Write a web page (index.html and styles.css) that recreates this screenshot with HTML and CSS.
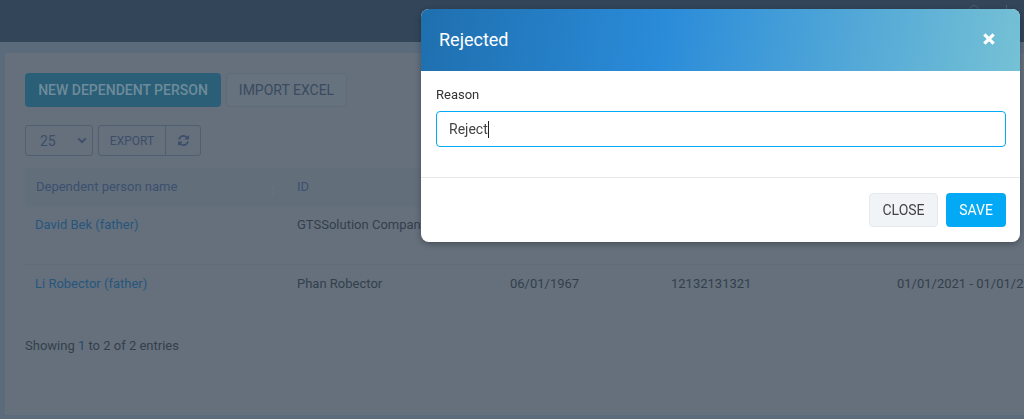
FILE: index.html
```html
<!DOCTYPE html>
<html lang="en">
<head>
  <meta charset="UTF-8" />
  <title>Dependent person</title>
  <meta name="viewport" content="width=device-width, initial-scale=1.0">
  <link rel="stylesheet" href="styles.css">
</head>
<body>

  <header class="topbar">
    <span class="topbar-search"></span>
    <span class="topbar-line"></span>
  </header>

  <main class="card">
    <div class="actions">
      <button class="btn btn-primary">NEW DEPENDENT PERSON</button>
      <button class="btn btn-light">IMPORT EXCEL</button>
    </div>

    <div class="tools">
      <div class="page-size">
        <span>25</span>
        <svg class="chevron" viewBox="0 0 12 8"><path d="M1.5 1.5 6 6l4.500-4.500" /></svg>
      </div>
      <div class="tool-group">
        <span class="tool tool-export">EXPORT</span>
        <span class="tool tool-refresh">
          <svg viewBox="0 0 1536 1536"><path d="M1511 928q0 5-1 7-64 268-268 434.500t-478 166.500q-146 0-282.500-55t-243.500-157l-129 129q-19 19-45 19t-45-19-19-45v-448q0-26 19-45t45-19h448q26 0 45 19t19 45-19 45l-137 137q71 66 161 102t187 36q134 0 250-65t186-179q11-17 53-117 8-23 30-23h192q13 0 22.500 9.500t9.500 22.500zm25-800v448q0 26-19 45t-45 19h-448q-26 0-45-19t-19-45 19-45l138-138q-148-137-349-137-134 0-250 65t-186 179q-11 17-53 117-8 23-30 23h-199q-13 0-22.500-9.500t-9.500-22.500v-7q65-268 270-434.500t480-166.500q146 0 284 55.500t245 156.500l130-129q19-19 45-19t45 19 19 45z" /></svg>
        </span>
      </div>
    </div>

    <div class="table">
      <div class="row row-head">
        <span class="head-cell">Dependent person name
          <svg class="sort" viewBox="0 0 8 14"><path d="M4 1 7 6H1zM4 13 1 8h6z" /></svg>
        </span>
        <span>ID</span>
      </div>
      <div class="row">
        <a href="#">David Bek (father)</a>
        <span>GTSSolution Company</span>
      </div>
      <div class="row row-last">
        <a href="#">Li Robector (father)</a>
        <span>Phan Robector</span>
        <span>06/01/1967</span>
        <span>12132131321</span>
        <span>01/01/2021 - 01/01/2022</span>
      </div>
    </div>

    <p class="entries">Showing <em>1</em> to 2 of 2 entries</p>
  </main>

  <!-- Hop thoai tu choi -->
  <div class="modal">
    <div class="modal-head">
      <h4>Rejected</h4>
      <svg class="modal-x" viewBox="0 0 12 12"><path d="M2 2l8 8M10 2l-8 8" /></svg>
    </div>
    <div class="modal-body">
      <label>Reason</label>
      <div class="field"><span>Reject</span><i class="caret"></i></div>
    </div>
    <div class="modal-foot">
      <button class="btn btn-close">CLOSE</button>
      <button class="btn btn-save">SAVE</button>
    </div>
  </div>

</body>
</html>
```

FILE: styles.css
```css
html, body {
  height: 100%;
}

/* the page sits behind the modal, so its colours are already dimmed */
body {
  margin: 0;
  overflow: hidden;
  background: #5c6b7c;
  color: #343f4b;
  font-family: Roboto, "Liberation Sans", sans-serif;
  font-size: 13px;
}

.topbar {
  display: flex;
  justify-content: flex-end;
  gap: 27px;
  height: 42px;
  padding: 5px 17px 0 0;
  box-sizing: border-box;
  background: #334559;
}

.topbar-search {
  width: 8px;
  height: 8px;
  border: 1px solid #4e5e73;
  border-radius: 50%;
}

.topbar-line {
  width: 1px;
  height: 8px;
  background: #4e5e73;
}

.card {
  height: 362px;
  margin: 11px 0 0 5px;
  padding: 20px 0 0 20px;
  background: #65707c;
  box-sizing: border-box;
}

.actions {
  display: flex;
  gap: 5px;
}

.btn {
  height: 34px;
  padding: 0;
  border: 1px solid transparent;
  border-radius: 4px;
  font-family: inherit;
  font-size: 14px;
}

.btn-primary {
  width: 196px;
  background: #2a5f77;
  color: #6f8b9b;
  font-weight: 500;
}

.btn-light {
  width: 121px;
  background: #66727d;
  border-color: #5f6b77;
  color: #3a4a60;
}

.tools {
  display: flex;
  gap: 5px;
  margin-top: 18px;
  color: #3c4e6a;
}

.page-size {
  display: flex;
  align-items: center;
  justify-content: space-between;
  width: 68px;
  height: 31px;
  padding: 0 5px 0 14px;
  border: 1px solid #4f5e70;
  border-radius: 3px;
  box-sizing: border-box;
  font-size: 14px;
}

.chevron {
  width: 10px;
  height: 7px;
  fill: none;
  stroke: #3c4e6a;
  stroke-width: 2.200;
}

.tool-group {
  display: flex;
  height: 31px;
  border: 1px solid #4f5e70;
  border-radius: 3px;
  box-sizing: border-box;
}

.tool {
  display: flex;
  align-items: center;
  justify-content: center;
}

.tool-export {
  width: 66px;
  border-right: 1px solid #4f5e70;
  font-size: 12px;
}

.tool-refresh {
  width: 34px;
}

.tool-refresh svg {
  width: 11px;
  height: 11px;
  fill: #3c4e6a;
}

.table {
  width: 1100px;
  margin-top: 12px;
}

.row {
  display: grid;
  grid-template-columns: 262px 213px 161px 226px auto;
  height: 58px;
  padding: 10px 0 0 10px;
  box-sizing: border-box;
  border-bottom: 1px solid #5f6b79;
  line-height: 16px;
  white-space: nowrap;
}

.row a {
  color: #27567c;
  text-decoration: none;
}

.row-head {
  grid-template-columns: 261px auto;
  height: 39px;
  padding: 11px 0 0 11px;
  background: #626e7a;
  border: 0;
  color: #3c5070;
}

.head-cell {
  display: flex;
  justify-content: space-between;
  padding-right: 21px;
}

.sort {
  width: 7px;
  height: 13px;
  margin-top: 5px;
  fill: #65717e;
}

.row-last {
  height: 59px;
  padding-top: 11px;
  border: 0;
}

.entries {
  margin: 14px 0 0;
  line-height: 16px;
}

.entries em {
  font-style: normal;
  color: #2a486c;
}

.modal {
  position: fixed;
  top: 9px;
  left: 421px;
  width: 599px;
  height: 233px;
  background: #fff;
  border-radius: 8px;
  overflow: hidden;
  box-shadow: 0 2px 6px rgba(0, 0, 0, 0.3);
}

.modal-head {
  display: flex;
  align-items: center;
  justify-content: space-between;
  height: 62px;
  padding: 0 24px 2px 18px;
  box-sizing: border-box;
  background: linear-gradient(100deg, #1f6fae 0%, #2a8bd9 40%, #75c1d5 100%);
  color: #fff;
}

.modal-head h4 {
  margin: 0;
  font-size: 18px;
  font-weight: 400;
}

.modal-x {
  width: 14px;
  height: 14px;
  fill: none;
  stroke: #fff;
  stroke-width: 2.800;
}

.modal-body {
  height: 107px;
  padding: 16px 14px 0 15px;
  box-sizing: border-box;
  border-bottom: 1px solid #e6e8eb;
}

.modal-body label {
  display: block;
  line-height: 16px;
  color: #333;
}

.field {
  display: flex;
  align-items: center;
  height: 36px;
  margin-top: 8px;
  padding: 0 12px;
  border: 1px solid #03a9f4;
  border-radius: 4px;
  box-sizing: border-box;
  color: #444;
  font-size: 14px;
}

.caret {
  width: 1px;
  height: 17px;
  background: #222;
}

.modal-foot {
  display: flex;
  justify-content: flex-end;
  gap: 8px;
  padding: 15px 14px 0;
}

.btn-close {
  width: 69px;
  background: #f1f4f7;
  border-color: #e5e8ec;
  color: #444;
}

.btn-save {
  width: 60px;
  background: #03a9f4;
  color: #fff;
}
```
